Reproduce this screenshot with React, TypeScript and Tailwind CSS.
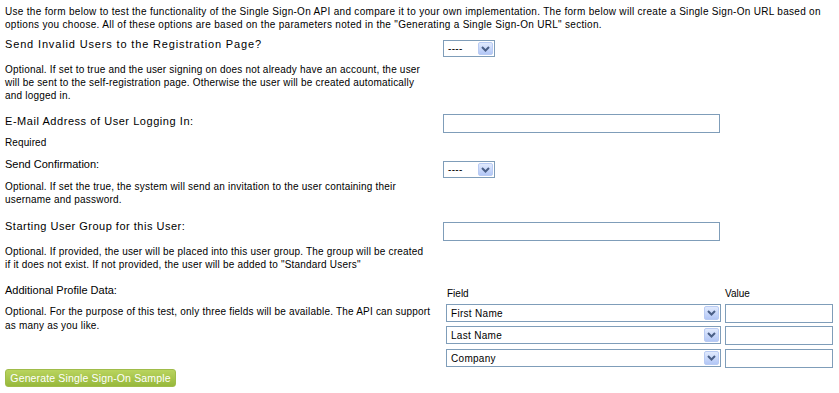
import React from "react";

function Chevron() {
  return (
    <svg width="9" height="6" viewBox="0 0 9 6" className="block">
      <path d="M1 1 L4.5 4.5 L8 1" fill="none" stroke="#4a5f86" strokeWidth="2" />
    </svg>
  );
}

function Select({ value, className }: { value: string; className: string }) {
  return (
    <div className={"flex items-center border border-[#7f9db9] bg-white " + className}>
      <span className="pl-[4px] whitespace-nowrap text-[10px] tracking-[0.3px]">{value}</span>
      <div className="ml-auto mr-px flex h-[calc(100%-2px)] w-[15px] items-center justify-center rounded-[2px] border border-[#b9cbf3] bg-gradient-to-b from-[#e1eafd] to-[#b3c7f6]">
        <Chevron />
      </div>
    </div>
  );
}

function TextBox({ className }: { className: string }) {
  return <div className={"border border-[#7f9db9] bg-white " + className} />;
}

export default function App() {
  return (
    <div className="h-[393px] w-[839px] overflow-hidden bg-white pl-[5px] pt-[5px] font-['Liberation_Sans',Arial,sans-serif] text-[10px] leading-[13px] text-black">
      <p className="whitespace-nowrap tracking-[0.3px]">
        Use the form below to test the functionality of the Single Sign-On API and compare it to your own implementation. The form below will create a Single Sign-On URL based on
        <br />
        options you choose. All of these options are based on the parameters noted in the "Generating a Single Sign-On URL" section.
      </p>

      {/* Section 1 */}
      <div className="mt-[7px] flex items-start">
        <p className="w-[438px] whitespace-nowrap text-[11px] tracking-[0.85px]">Send Invalid Users to the Registration Page?</p>
        <Select value="----" className="mt-[2px] h-[17px] w-[52px]" />
      </div>
      <p className="mt-[6px] whitespace-nowrap tracking-[0.2px]">
        Optional. If set to true and the user signing on does not already have an account, the user
        <br />
        will be sent to the self-registration page. Otherwise the user will be created automatically
        <br />
        and logged in.
      </p>

      {/* Section 2 */}
      <div className="mt-[12px] flex items-start">
        <p className="w-[438px] whitespace-nowrap pt-[1px] text-[11px] tracking-[0.55px]">E-Mail Address of User Logging In:</p>
        <TextBox className="h-[19px] w-[277px]" />
      </div>
      <p className="mt-[3px] tracking-[0.1px]">Required</p>

      {/* Section 3 */}
      <div className="mt-[9px] flex items-start">
        <p className="w-[438px] whitespace-nowrap text-[11px]">Send Confirmation:</p>
        <Select value="----" className="mt-[3px] h-[17px] w-[52px]" />
      </div>
      <p className="mt-[2px] whitespace-nowrap tracking-[0.2px]">
        Optional. If set the true, the system will send an invitation to the user containing their
        <br />
        username and password.
      </p>

      {/* Section 4 */}
      <div className="mt-[14px] flex items-start">
        <p className="w-[438px] whitespace-nowrap text-[11px] tracking-[0.5px]">Starting User Group for this User:</p>
        <TextBox className="mt-[2px] h-[19px] w-[277px]" />
      </div>
      <p className="mt-[4px] whitespace-nowrap tracking-[0.2px]">
        Optional. If provided, the user will be placed into this user group. The group will be created
        <br />
        if it does not exist. If not provided, the user will be added to "Standard Users"
      </p>

      {/* Section 5 */}
      <div className="mt-[13px] flex items-start">
        <div className="w-[438px]">
          <p className="whitespace-nowrap text-[11px]">Additional Profile Data:</p>
          <p className="mt-[8px] whitespace-nowrap leading-[14px] tracking-[0.2px]">
            Optional. For the purpose of this test, only three fields will be available. The API can support
            <br />
            as many as you like.
          </p>
        </div>
        <div className="pl-[3px] pt-[3px]">
          <div className="flex">
            <span className="w-[279px] pl-[1px]">Field</span>
            <span>Value</span>
          </div>
          <div className="mt-[4px] flex gap-[4px]">
            <Select value="First Name" className="h-[18px] w-[275px]" />
            <TextBox className="h-[19px] w-[108px]" />
          </div>
          <div className="mt-[3px] flex gap-[4px]">
            <Select value="Last Name" className="h-[18px] w-[275px]" />
            <TextBox className="h-[19px] w-[108px]" />
          </div>
          <div className="mt-[4px] flex gap-[4px]">
            <Select value="Company" className="h-[18px] w-[275px]" />
            <TextBox className="h-[19px] w-[108px]" />
          </div>
        </div>
      </div>

      <button className="mt-[1px] flex h-[18px] w-[171px] items-center justify-center whitespace-nowrap rounded-[3px] border border-[#a0bc4a] bg-gradient-to-b from-[#b9d45e] to-[#97b83b] text-[10.5px] tracking-[0.15px] text-white">
        Generate Single Sign-On Sample
      </button>
    </div>
  );
}
